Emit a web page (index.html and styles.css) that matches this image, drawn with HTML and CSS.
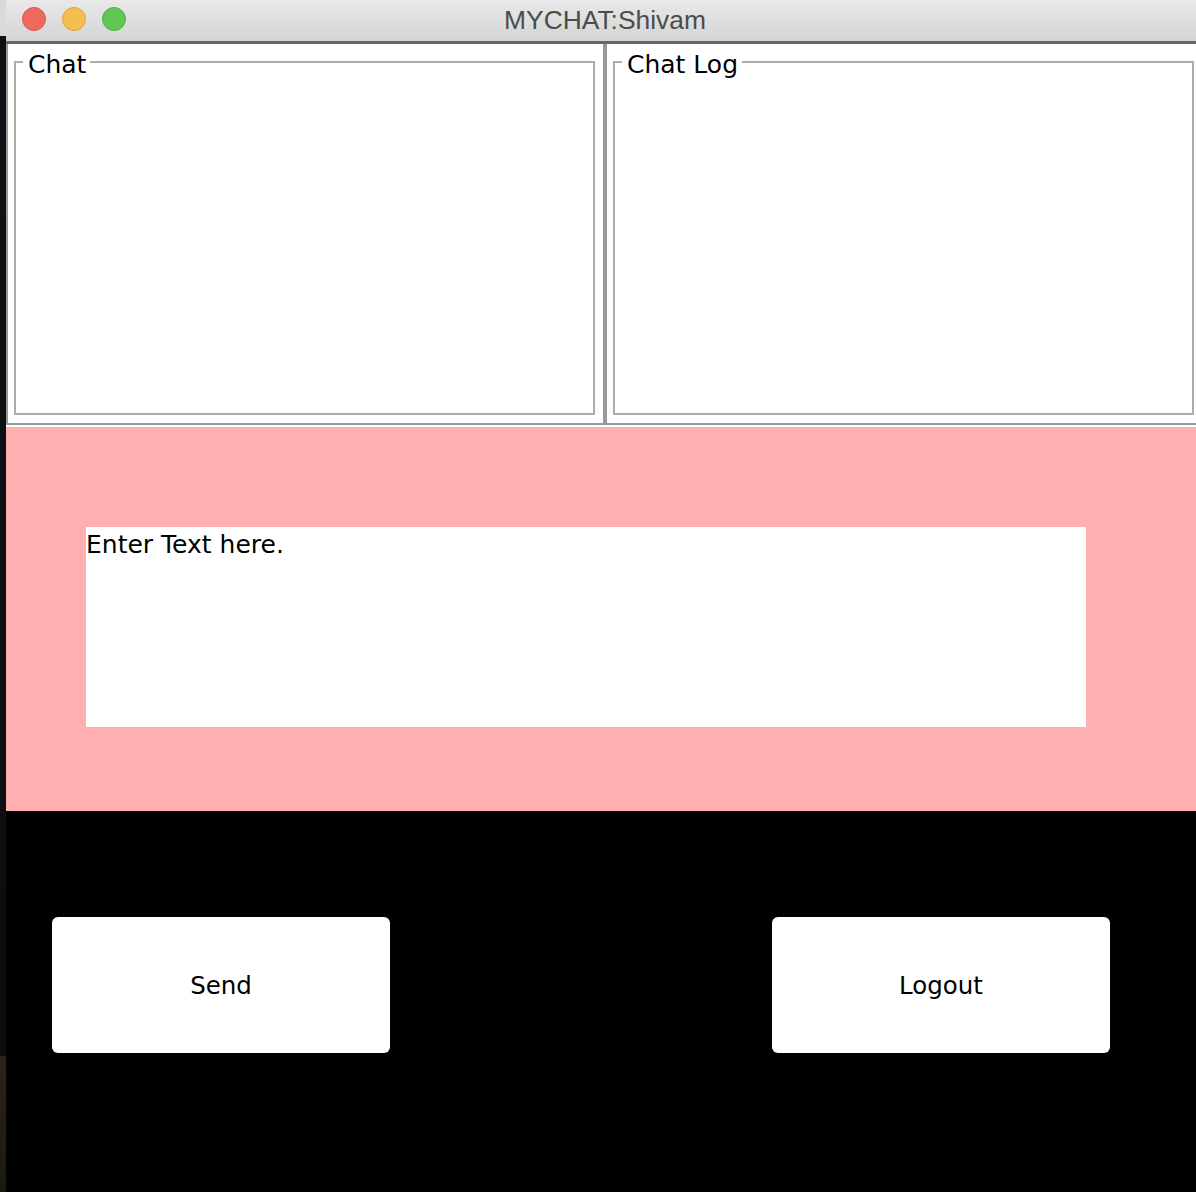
FILE: index.html
```html
<!DOCTYPE html>
<html lang="en">
<head>
    <meta charset="UTF-8">
    <meta name="viewport" content="width=device-width, initial-scale=1.0">
    <title>MYCHAT:Shivam</title>
    <link rel="stylesheet" href="styles.css">
</head>
<body>
    <div class="window">
        <div class="titlebar">
            <div class="lights">
                <span class="light close"></span>
                <span class="light minimize"></span>
                <span class="light zoom"></span>
            </div>
            <div class="title">MYCHAT:Shivam</div>
            <div></div>
        </div>

        <div class="panels">
            <div class="panel">
                <fieldset class="group">
                    <legend>Chat</legend>
                </fieldset>
            </div>
            <div class="panel">
                <fieldset class="group">
                    <legend>Chat Log</legend>
                </fieldset>
            </div>
        </div>

        <div class="compose">
            <textarea class="message" id="message">Enter Text here.</textarea>
        </div>

        <div class="actions">
            <button class="action" type="button">Send</button>
            <button class="action" type="button">Logout</button>
        </div>
    </div>
</body>
</html>
```

FILE: styles.css
```css
* {
    box-sizing: border-box;
    margin: 0;
    padding: 0;
}

body {
    font-family: "DejaVu Sans", Verdana, sans-serif;
    height: 1192px;
    overflow: hidden;
    background: linear-gradient(#dadada 0, #dadada 36px, #0e1216 36px, #0c0d0d 1056px, #2a2419 1056px, #1c1812 1192px);
}

.window {
    margin-left: 6px;
    width: 1198px;
    display: flex;
    flex-direction: column;
}

/* title bar */
.titlebar {
    height: 44px;
    display: grid;
    grid-template-columns: 1fr auto 1fr;
    align-items: center;
    background: linear-gradient(#e9e9e9, #d4d4d4);
    border-bottom: 3px solid #666;
}

.lights {
    display: flex;
    gap: 16px;
    padding-left: 16px;
    align-self: start;
    margin-top: 7px;
}

.light {
    width: 24px;
    height: 24px;
    border-radius: 50%;
    border: 1px solid;
}

.close {
    background-color: #ee6a5f;
    border-color: #d9544a;
}

.minimize {
    background-color: #f5bf4f;
    border-color: #dba43a;
}

.zoom {
    background-color: #62c655;
    border-color: #4faf43;
}

.title {
    font-family: "Liberation Sans", Arial, sans-serif;
    font-size: 26.4px;
    color: #4c4c4c;
}

/* top panels */
.panels {
    display: flex;
    height: 383px;
    padding-bottom: 2px;
    background-color: #fff;
}

.panel {
    width: 599px;
    display: flex;
    flex-direction: column;
    border: 2px solid #999;
    border-top: none;
    padding: 0 8px 8px 6px;
}

.group {
    flex-grow: 1;
    min-width: 0;
    border: 2px solid #adadad;
    padding: 0 7px;
}

.group legend {
    font-size: 25px;
    padding: 6px 4px 0 5px;
    color: #000;
}

/* message input */
.compose {
    height: 384px;
    background-color: #ffafaf;
    padding: 100px 0 0 80px;
}

.message {
    display: block;
    width: 1000px;
    height: 200px;
    border: none;
    outline: none;
    resize: none;
    overflow: hidden;
    padding: 3px 0 0 0;
    font-family: "DejaVu Sans", Verdana, sans-serif;
    font-size: 25px;
    color: #000;
    background-color: #fff;
}

/* buttons */
.actions {
    height: 400px;
    background-color: #000;
    display: flex;
    align-items: flex-start;
    gap: 382px;
    padding: 106px 0 0 46px;
}

.action {
    width: 338px;
    height: 136px;
    background-color: #fff;
    border: none;
    border-radius: 6px;
    font-family: "DejaVu Sans", Verdana, sans-serif;
    font-size: 24.5px;
    color: #000;
}
```
